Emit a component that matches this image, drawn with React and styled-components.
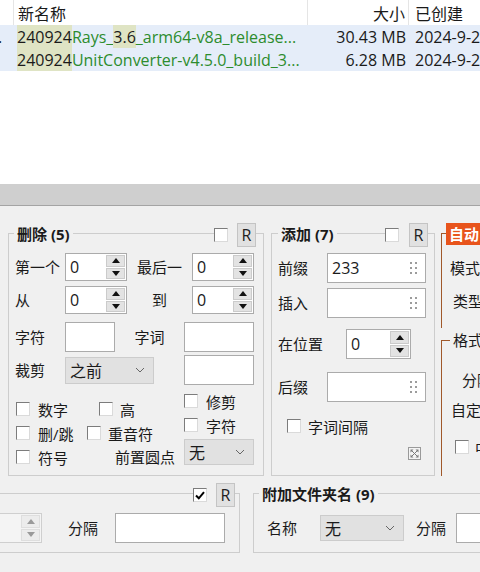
import React from 'react';
import styled, { createGlobalStyle } from 'styled-components';

const Global = createGlobalStyle`
  html, body { margin: 0; padding: 0; }
  body {
    width: 480px; height: 572px; overflow: hidden;
    font-family: "Open Sans", "Noto Sans CJK SC", sans-serif;
  }
`;

const Root = styled.div`
  width: 480px; height: 572px; overflow: hidden;
  display: flex; flex-direction: column;
  background: #f0f0f0; color: #1a1a1a;
  font-family: "Open Sans", "Noto Sans CJK SC", sans-serif;
`;

/* ---------- file list ---------- */
const List = styled.div`
  flex: none; height: 184px; background: #fff; overflow: hidden;
`;
const HeadRow = styled.div`
  display: flex; height: 25px; font-size: 16px;
`;
const HeadCell = styled.div`
  flex: none; box-sizing: border-box; width: ${p => p.$w}px;
  display: flex; align-items: center;
  justify-content: ${p => (p.$right ? 'flex-end' : 'flex-start')};
  padding: ${p => p.$pad || '0'};
  border-right: ${p => (p.$line ? '1px solid #e5e5e5' : 'none')};
  white-space: nowrap; overflow: hidden;
`;
const FileRow = styled.div`
  display: flex; height: 23px; background: #e5edf9; font-size: 16px;
`;
const Cell = styled.div`
  flex: none; box-sizing: border-box; width: ${p => p.$w}px;
  display: flex; align-items: stretch;
  justify-content: ${p => (p.$right ? 'flex-end' : 'flex-start')};
  padding: ${p => p.$pad || '0'};
  white-space: nowrap; overflow: hidden;
`;
const Txt = styled.span`
  display: flex; align-items: center; line-height: 22px;
  color: ${p => (p.$green ? '#2d8c2d' : '#1a1a1a')};
  background: ${p => (p.$hl ? '#dfe4c4' : 'transparent')};
  margin-left: ${p => p.$ml || 0}px;
`;

/* ---------- splitter ---------- */
const Splitter = styled.div`
  flex: none; height: 21px; background: #cfcfcf; border-bottom: 1px solid #a4a4a4;
`;

/* ---------- panel ---------- */
const Panel = styled.div`
  flex: 1; display: flex; flex-direction: column; padding-top: 27px;
`;
const GroupRow = styled.div`
  display: flex; align-items: flex-start; margin-top: ${p => p.$mt || 0}px;
`;
const Group = styled.div`
  position: relative; flex: none; box-sizing: border-box;
  width: ${p => p.$w}px; height: ${p => p.$h}px; margin-left: ${p => p.$ml || 0}px;
  border: 1px solid #cdcdcd;
  padding: ${p => p.$pad || '19px 0 0 6px'};
  display: flex; flex-direction: column;
`;
const Legend = styled.div`
  position: absolute; top: -10px; left: ${p => p.$l}px;
  padding: 0 3px; background: #f0f0f0; line-height: 20px;
  font-size: 15px; font-weight: bold; white-space: nowrap;
`;
const Tools = styled.div`
  position: absolute; top: -11px; right: ${p => p.$r}px;
  display: flex; align-items: center; gap: ${p => p.$gap || 9}px;
  background: #f0f0f0;
`;
const RBtn = styled.div`
  width: 19px; height: 24px; box-sizing: border-box;
  background: #e1e1e1; border: 1px solid #c4c4c4;
  display: flex; align-items: center; justify-content: center;
  font-size: 16px; color: #222;
`;
const Row = styled.div`
  display: flex; align-items: center; flex: none;
  height: ${p => p.$h}px; margin-top: ${p => p.$mt || 0}px;
  margin-left: ${p => p.$ml || 0}px;
  justify-content: ${p => (p.$end ? 'flex-end' : 'flex-start')};
  margin-right: ${p => p.$mr || 0}px;
`;
const Label = styled.div`
  flex: none; width: ${p => (p.$w ? `${p.$w}px` : 'auto')};
  margin-left: ${p => p.$ml || 0}px; margin-right: ${p => p.$mr || 0}px;
  text-align: ${p => p.$align || 'left'};
  font-size: 15px; white-space: nowrap; line-height: 20px;
`;
const Spacer = styled.div`
  flex: ${p => (p.$w ? 'none' : 1)}; width: ${p => p.$w || 0}px;
`;

/* inputs */
const InputBox = styled.div`
  flex: none; box-sizing: border-box; position: relative;
  width: ${p => p.$w}px; height: ${p => p.$h || 30}px;
  background: #fff; border: 1px solid #ababab;
  display: flex; align-items: center; padding-left: 4px; font-size: 16px;
`;
const GripWrap = styled.span`
  position: absolute; right: 8px; top: 50%; transform: translateY(-50%);
  display: flex;
`;
const SpinBox = styled.div`
  flex: none; box-sizing: border-box; display: flex;
  width: ${p => p.$w}px; height: ${p => p.$h || 28}px;
  background: ${p => (p.$disabled ? '#f4f4f4' : '#fff')};
  border: 1px solid ${p => (p.$disabled ? '#cfcfcf' : '#ababab')};
`;
const SpinText = styled.div`
  flex: 1; display: flex; align-items: center; padding-left: 4px; font-size: 16px;
`;
const SpinBtns = styled.div`
  flex: none; width: 20px; display: flex; flex-direction: column; gap: 1px;
  padding: 1px 1px 1px 0; box-sizing: border-box;
`;
const SpinBtn = styled.div`
  flex: 1; background: ${p => (p.$disabled ? '#ececec' : '#e3e3e3')};
  border: 1px solid ${p => (p.$disabled ? '#dedede' : '#cbcbcb')};
  display: flex; align-items: center; justify-content: center;
`;
const SelectBox = styled.div`
  flex: none; box-sizing: border-box;
  width: ${p => p.$w}px; height: ${p => p.$h || 27}px;
  background: #e1e1e1; border: 1px solid #cccccc;
  display: flex; align-items: center; justify-content: space-between;
  padding: 0 8px 0 4px; font-size: 16px;
`;

/* checkbox */
const Box = styled.span`
  flex: none; width: 14px; height: 14px; box-sizing: border-box;
  background: #fff; border: 1px solid;
  border-color: #7c7c7c #dadada #dadada #7c7c7c;
  display: inline-flex; align-items: center; justify-content: center;
`;
const CheckItem = styled.div`
  flex: none; display: flex; align-items: center;
  gap: ${p => p.$gap || 8}px; width: ${p => (p.$w ? `${p.$w}px` : 'auto')};
  margin-left: ${p => p.$ml || 0}px; font-size: 15px; white-space: nowrap;
`;

/* layout helpers for 删除 */
const Bottom = styled.div`
  display: flex; flex: none;
`;
const Col = styled.div`
  flex: none; display: flex; flex-direction: column;
  width: ${p => p.$w}px; padding-top: ${p => p.$pt || 0}px;
`;

/* auto group */
const AutoGroup = styled.div`
  position: relative; flex: none; box-sizing: border-box;
  width: 100px; height: 243px; margin-left: ${p => p.$ml}px;
  border-top: 1px solid #a0582a;
  display: flex; flex-direction: column;
`;
const Badge = styled.div`
  position: absolute; top: -11px; left: 5px; height: 22px;
  padding: 0 3px; background: #e8541c; color: #fff;
  font-size: 15px; font-weight: bold; line-height: 22px; white-space: nowrap;
`;
const AutoUpper = styled.div`
  flex: none; height: 94px; border-left: 1px solid #a0582a;
  padding: 24px 0 0 8px; box-sizing: border-box;
  display: flex; flex-direction: column;
`;
const AutoLower = styled.div`
  position: relative; flex: 1; margin-top: 12px;
  border-left: 1px solid #a0582a; border-top: 1px solid #a0582a;
  padding: 29px 0 0 9px; display: flex; flex-direction: column;
`;
const SubLegend = styled.div`
  position: absolute; top: -11px; left: 8px; padding: 0 3px;
  background: #f0f0f0; font-size: 15px; line-height: 20px; white-space: nowrap;
`;

/* ---------- icons ---------- */
const Arrow = ({ up, disabled }) => (
  <svg width="8" height="5" viewBox="0 0 8 5">
    <path d={up ? 'M0 5 L4 0 L8 5 Z' : 'M0 0 L8 0 L4 5 Z'} fill={disabled ? '#9a9a9a' : '#111'} />
  </svg>
);
const Chevron = () => (
  <svg width="10" height="6" viewBox="0 0 10 6">
    <path d="M1 1 L5 5 L9 1" fill="none" stroke="#666" strokeWidth="1" />
  </svg>
);
const Grip = () => (
  <svg width="7" height="13" viewBox="0 0 7 13">
    {[1, 6].map(x => [1.5, 6.5, 11.5].map(y => (
      <rect key={`${x}-${y}`} x={x - 0.8} y={y - 0.8} width="1.6" height="1.6" fill="#666" />
    )))}
  </svg>
);
const Tick = () => (
  <svg width="10" height="9" viewBox="0 0 10 9">
    <path d="M1 4.5 L3.8 7.3 L9 1.2" fill="none" stroke="#000" strokeWidth="2" />
  </svg>
);
const ExpandIcon = () => (
  <svg width="13" height="13" viewBox="0 0 13 13">
    <rect x="0.5" y="0.5" width="12" height="12" fill="#f4f4f4" stroke="#9a9a9a" />
    <path d="M3 3 L10 10 M10 3 L3 10" stroke="#7a7a7a" strokeWidth="1" />
    <path d="M2.5 2.5 h3 l-3 3 z M10.5 2.5 v3 l-3 -3 z M2.5 10.5 v-3 l3 3 z M10.5 10.5 h-3 l3 -3 z" fill="#7a7a7a" />
  </svg>
);

/* ---------- small components ---------- */
const Check = ({ checked }) => <Box>{checked && <Tick />}</Box>;
const Spin = ({ w, h, value, disabled }) => (
  <SpinBox $w={w} $h={h} $disabled={disabled}>
    <SpinText>{value}</SpinText>
    <SpinBtns>
      <SpinBtn $disabled={disabled}><Arrow up disabled={disabled} /></SpinBtn>
      <SpinBtn $disabled={disabled}><Arrow disabled={disabled} /></SpinBtn>
    </SpinBtns>
  </SpinBox>
);
const Input = ({ w, h, value, grip }) => (
  <InputBox $w={w} $h={h}>
    {value}
    {grip && <GripWrap><Grip /></GripWrap>}
  </InputBox>
);
const Select = ({ w, h, value }) => (
  <SelectBox $w={w} $h={h}>
    <span>{value}</span>
    <Chevron />
  </SelectBox>
);

export default function App() {
  return (
    <Root>
      <Global />
      <List>
        <HeadRow>
          <HeadCell $w={14} $line />
          <HeadCell $w={294} $pad="0 0 0 4px" $line>新名称</HeadCell>
          <HeadCell $w={101} $right $pad="0 3px 0 0" $line>大小</HeadCell>
          <HeadCell $w={100} $pad="0 0 0 6px">已创建</HeadCell>
        </HeadRow>
        <FileRow>
          <Cell $w={14}><Txt $ml={-2}>.</Txt></Cell>
          <Cell $w={294} $pad="0 0 0 3px">
            <Txt $hl>240924</Txt>
            <Txt $green>Rays_</Txt>
            <Txt $hl>3.6</Txt>
            <Txt $green>_arm64-v8a_release...</Txt>
          </Cell>
          <Cell $w={101} $right $pad="0 3px 0 0"><Txt>30.43 MB</Txt></Cell>
          <Cell $w={100} $pad="0 0 0 6px"><Txt>2024-9-24</Txt></Cell>
        </FileRow>
        <FileRow>
          <Cell $w={14} />
          <Cell $w={294} $pad="0 0 0 3px">
            <Txt $hl>240924</Txt>
            <Txt $green>UnitConverter-v4.5.0_build_3...</Txt>
          </Cell>
          <Cell $w={101} $right $pad="0 3px 0 0"><Txt>6.28 MB</Txt></Cell>
          <Cell $w={100} $pad="0 0 0 6px"><Txt>2024-9-24</Txt></Cell>
        </FileRow>
      </List>
      <Splitter />
      <Panel>
        <GroupRow>
          {/* 删除 */}
          <Group $w={256} $h={243} $ml={8}>
            <Legend $l={5}>删除 (5)</Legend>
            <Tools $r={7}><Check /><RBtn>R</RBtn></Tools>
            <Row $h={28}>
              <Label $w={50}>第一个</Label>
              <Spin w={62} value="0" />
              <Label $w={65} $align="center">最后一</Label>
              <Spin w={62} value="0" />
            </Row>
            <Row $h={28} $mt={5}>
              <Label $w={50}>从</Label>
              <Spin w={62} value="0" />
              <Label $w={65} $align="center">到</Label>
              <Spin w={62} value="0" />
            </Row>
            <Row $h={30} $mt={8}>
              <Label $w={50}>字符</Label>
              <Input w={50} />
              <Label $w={69} $align="center">字词</Label>
              <Input w={70} />
            </Row>
            <Row $h={30} $mt={3}>
              <Label $w={50}>裁剪</Label>
              <Select w={89} value="之前" />
              <Spacer $w={30} />
              <Input w={70} />
            </Row>
            <Bottom>
              <Col $w={169} $pt={12}>
                <Row $h={24}>
                  <CheckItem $w={83} $ml={1}><Check />数字</CheckItem>
                  <CheckItem $gap={7}><Check />高</CheckItem>
                </Row>
                <Row $h={24}>
                  <CheckItem $w={71} $ml={1}><Check />删/跳</CheckItem>
                  <CheckItem $gap={7}><Check />重音符</CheckItem>
                </Row>
                <Row $h={24}>
                  <CheckItem $ml={1}><Check />符号</CheckItem>
                  <Spacer />
                  <Label $mr={9}>前置圆点</Label>
                </Row>
              </Col>
              <Col $w={70} $pt={4}>
                <Row $h={24}><CheckItem><Check />修剪</CheckItem></Row>
                <Row $h={24}><CheckItem><Check />字符</CheckItem></Row>
                <Row $h={26} $mt={2}><Select w={70} h={26} value="无" /></Row>
              </Col>
            </Bottom>
          </Group>

          {/* 添加 */}
          <Group $w={164} $h={243} $ml={7}>
            <Legend $l={6}>添加 (7)</Legend>
            <Tools $r={6} $gap={10}><Check /><RBtn>R</RBtn></Tools>
            <Row $h={30}>
              <Label $w={49}>前缀</Label>
              <Input w={99} value="233" grip />
            </Row>
            <Row $h={30} $mt={5}>
              <Label $w={49}>插入</Label>
              <Input w={99} grip />
            </Row>
            <Row $h={30} $mt={11}>
              <Label $w={68}>在位置</Label>
              <Spin w={65} h={30} value="0" />
            </Row>
            <Row $h={30} $mt={13}>
              <Label $w={49}>后缀</Label>
              <Input w={99} grip />
            </Row>
            <Row $h={24} $mt={12} $ml={9}>
              <CheckItem $gap={7}><Check />字词间隔</CheckItem>
            </Row>
            <Row $h={13} $mt={9} $end $mr={13}>
              <ExpandIcon />
            </Row>
          </Group>

          {/* 自动 */}
          <AutoGroup $ml={6}>
            <Badge>自动</Badge>
            <AutoUpper>
              <Row $h={20}><Label>模式</Label></Row>
              <Row $h={20} $mt={13} $ml={3}><Label>类型</Label></Row>
            </AutoUpper>
            <AutoLower>
              <SubLegend>格式</SubLegend>
              <Row $h={20} $ml={11}><Label>分隔</Label></Row>
              <Row $h={20} $mt={10}><Label>自定</Label></Row>
              <Row $h={24} $mt={15} $ml={4}>
                <CheckItem $gap={6}><Check />中间</CheckItem>
              </Row>
            </AutoLower>
          </AutoGroup>
        </GroupRow>

        <GroupRow $mt={17}>
          <Group $w={270} $h={60} $ml={-30} $pad="19px 0 0 0">
            <Tools $r={4}><Check checked /><RBtn>R</RBtn></Tools>
            <Row $h={30}>
              <Spin w={71} h={30} disabled />
              <Label $w={47} $ml={26}>分隔</Label>
              <Input w={110} />
            </Row>
          </Group>
          <Group $w={260} $h={60} $ml={13} $pad="19px 0 0 13px">
            <Legend $l={5}>附加文件夹名 (9)</Legend>
            <Row $h={30}>
              <Label $w={53}>名称</Label>
              <Select w={84} h={26} value="无" />
              <Label $w={40} $ml={12}>分隔</Label>
              <Input w={100} />
            </Row>
          </Group>
        </GroupRow>
      </Panel>
    </Root>
  );
}
